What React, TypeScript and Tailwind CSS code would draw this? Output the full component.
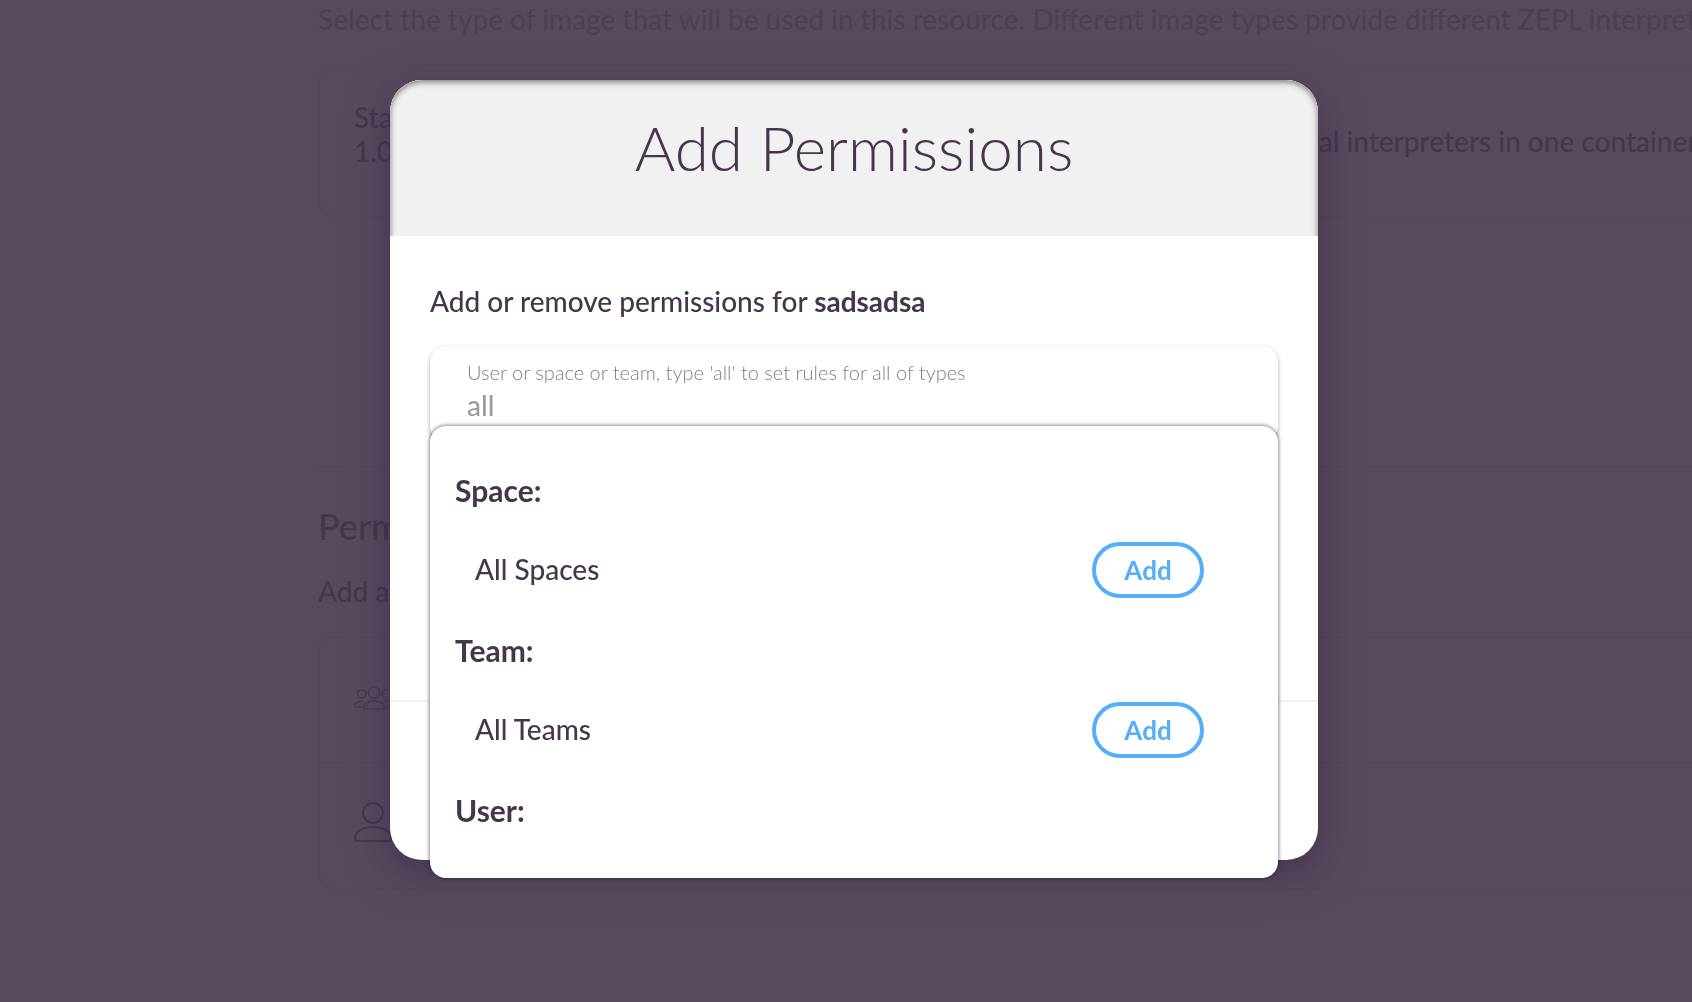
import React, { useState } from "react";

function UserIcon({ className }: { className: string }) {
  return (
    <svg viewBox="0 0 38 40" className={className} fill="none" stroke="currentColor" strokeWidth="2" aria-hidden="true">
      <circle cx="19" cy="11" r="10" />
      <path d="M1 36.500C1 29.500 9 25 19 25S37 29.500 37 36.500V37.500Q37 39 35.500 39H2.500Q1 39 1 37.500Z" strokeLinejoin="round" />
    </svg>
  );
}

function GroupIcon({ className }: { className: string }) {
  return (
    <svg viewBox="0 0 40 24" className={className} fill="none" stroke="currentColor" strokeWidth="1.5" aria-hidden="true">
      <circle cx="20" cy="6.500" r="5.700" />
      <circle cx="7.700" cy="8" r="4.200" />
      <circle cx="32.300" cy="8" r="4.200" />
      <path d="M9.600 21.500C9.600 17.500 14 15 20 15S30.400 17.500 30.400 21.500Q30.400 23 29 23H11Q9.600 23 9.600 21.500Z" />
      <path d="M9.500 15C4.500 14.500 0.800 16.500 0.800 20Q0.800 21 2 21H8" />
      <path d="M30.500 15C35.500 14.500 39.200 16.500 39.200 20Q39.200 21 38 21H32" />
    </svg>
  );
}

function ResourcePage() {
  return (
    <main className="min-h-screen overflow-hidden bg-white pl-[318px] text-[28px] leading-[34px] font-medium whitespace-nowrap">
      <p className="pt-0.5 text-[#8f8f8f]">
        Select the type of image that will be used in this resource. Different image types provide different ZEPL interpreters
      </p>
      <section className="-mr-4 mt-7 flex h-[154px] items-center rounded-2xl border-2 border-[#e4e4e4] pl-[34px]">
        <p className="w-[896px] pb-3.5">
          Standard
          <br />
          1.0
        </p>
        <p>Several interpreters in one container</p>
      </section>
      <hr className="mt-[248px] border-t-2 border-[#e4e4e4]" />
      <h2 className="mt-9 text-[36px] leading-[44px]">Permissions</h2>
      <p className="mt-[26px]">Add a rule</p>
      <ul className="-mr-4 mt-7 rounded-2xl border-2 border-[#e4e4e4]">
        <li className="flex h-[126px] items-center border-b-2 border-[#e4e4e4] pb-1 pl-[34px]">
          <GroupIcon className="h-6 w-10 text-[#666666]" />
        </li>
        <li className="flex h-[124px] items-center pb-2 pl-[34px]">
          <UserIcon className="h-10 w-[38px]" />
        </li>
      </ul>
    </main>
  );
}

function ResultGroup({ title, item }: { title: string; item?: string }) {
  return (
    <section className="h-40">
      <h3 className="text-[30px] leading-9 font-bold">{title}</h3>
      {item && (
        <div className="mt-[34px] flex h-14 items-center justify-between pr-[74px] pl-5">
          <span className="pb-0.5">{item}</span>
          <button
            type="button"
            aria-label={`Add ${item}`}
            className="h-14 w-28 rounded-full border-4 border-[#55aef9] text-[26px] font-bold text-[#55aef9]"
          >
            Add
          </button>
        </div>
      )}
    </section>
  );
}

function PermissionsDialog() {
  const [query, setQuery] = useState("all");
  return (
    <div
      role="dialog"
      aria-labelledby="dialog-title"
      className="w-full max-w-[928px] rounded-[32px] bg-white shadow-[0_12px_40px_rgba(52,36,66,0.6)]"
    >
      <header className="relative overflow-hidden rounded-t-[32px] bg-[#f1f1f1] pt-[27px] pb-[49px]">
        <h1 id="dialog-title" className="text-center text-[62px] leading-20 font-light">
          Add Permissions
        </h1>
        <div className="pointer-events-none absolute inset-x-0 top-0 -bottom-4 rounded-t-[32px] shadow-[inset_0_2px_6px_rgba(0,0,0,0.5)]" />
      </header>
      <div className="min-h-[464px] px-10 pt-12 font-medium">
        <p className="leading-[34px]">
          Add or remove permissions for <strong className="font-bold">sadsadsa</strong>
        </p>
        <div className="relative mt-7 rounded-2xl shadow-[0_2px_4px_rgba(0,0,0,0.35)]">
          <div className="flex h-24 flex-col rounded-2xl px-[37px] pt-[11px] text-[#9b9b9b]">
            <label htmlFor="query" className="text-[20px] leading-[30px] font-light text-[#808080]">
              User or space or team, type 'all' to set rules for all of types
            </label>
            <input
              id="query"
              value={query}
              onChange={(e) => setQuery(e.target.value)}
              className="h-9 w-full bg-transparent outline-none"
            />
          </div>
          <div className="absolute inset-x-0 top-20 h-[452px] overflow-hidden rounded-2xl bg-white pt-[46px] pl-[25px] shadow-[0_0_4px_rgba(40,30,50,0.8)]">
            <ResultGroup title="Space:" item="All Spaces" />
            <ResultGroup title="Team:" item="All Teams" />
            <ResultGroup title="User:" />
          </div>
        </div>
      </div>
      <footer className="h-40 border-t-2 border-[#f1f1f1]" />
    </div>
  );
}

export default function App() {
  return (
    <div className="h-screen overflow-hidden font-['Lato',sans-serif] text-[28px] text-[#45364b]">
      <ResourcePage />
      <div className="fixed inset-0 flex items-start justify-center bg-[#45364b]/90 pt-20 pl-4">
        <PermissionsDialog />
      </div>
    </div>
  );
}
